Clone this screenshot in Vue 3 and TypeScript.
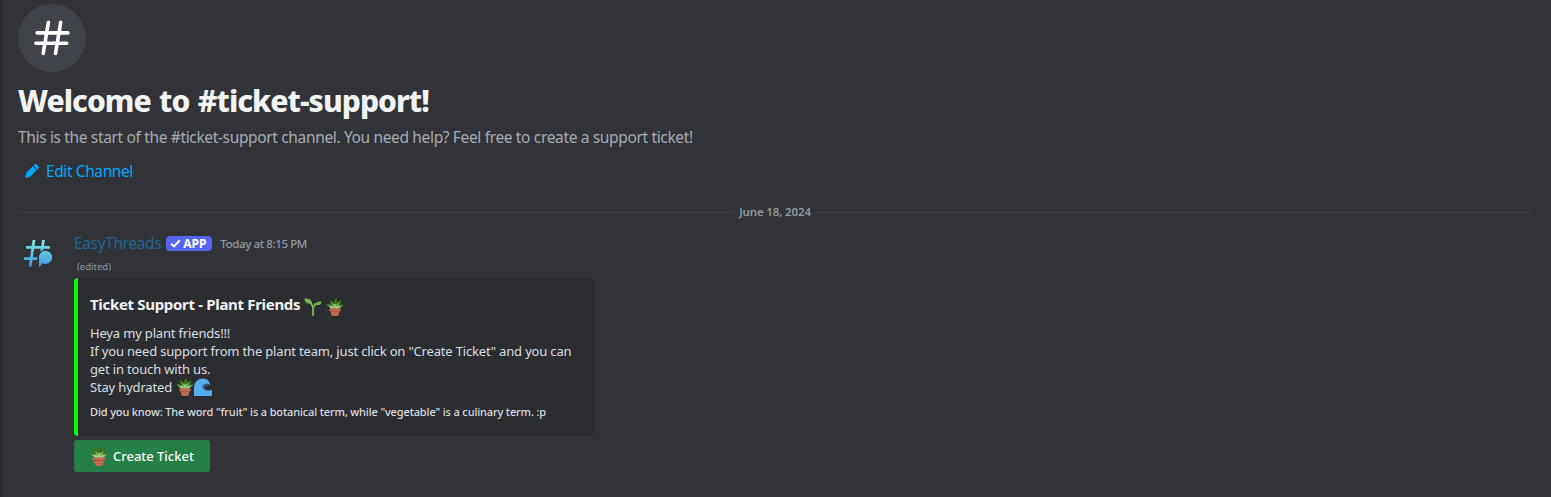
<script setup lang="ts">
interface Embed {
  title: string
  lines: string[]
  footer: string
}

const channel = 'ticket-support'
const embed: Embed = {
  title: 'Ticket Support - Plant Friends',
  lines: [
    'Heya my plant friends!!!',
    'If you need support from the plant team, just click on "Create Ticket" and you can',
    'get in touch with us.',
  ],
  footer: 'Did you know: The word "fruit" is a botanical term, while "vegetable" is a culinary term. :p',
}
</script>

<template>
  <svg class="defs" width="0" height="0" aria-hidden="true">
    <symbol id="plant" viewBox="0 0 18 18">
      <path d="M8.800 10C6.800 7.500 3.600 5.500 3.900 1.900 6 2.600 7 4 7.600 5.500 7.600 3 8.600 1 10.700 0 11.300 1.800 11.100 3.400 10.500 5 11.700 3.300 13.300 2.500 15.500 2.400 15 6.200 12.300 9.200 8.800 10Z" fill="#3e721d" />
      <path d="M8.500 10.400C5 10.400 2 9.300.6 6.200 3.200 5.600 6 6.700 8.500 10.400ZM9 10.400C11.300 6.800 14.300 5.900 17.500 6.700 15.900 9.600 12.500 10.700 9 10.400Z" fill="#4f8430" />
      <path d="M8.800 10.500C6.300 8.700 5.200 6.600 5.700 4.600 7.900 5.600 8.900 7.600 8.800 10.500ZM8.800 10.500C9 7.500 10.500 5.300 13 4.800 13 7.700 11.600 9.600 8.800 10.500Z" fill="#77b255" />
      <path d="M8.800 10.800C6.200 11 4 10.200 3 8.200 5.700 7.400 7.700 8.300 8.800 10.800ZM9 10.800C10.400 8.300 12.500 7.500 15 8.300 13.600 10.500 11.400 11.200 9 10.800ZM8.800 10.500C7.700 8.700 7.900 7 9.200 5.600 10.300 7.400 10.200 9 8.800 10.500Z" fill="#a6d388" />
      <path d="M3.700 11.300h10.600l-1.700 5.400c-.2.800-.7 1.300-1.500 1.300H6.900c-.8 0-1.300-.5-1.500-1.300Z" fill="#c1694f" />
      <rect x="3" y="10.400" width="12" height="2.300" rx=".8" fill="#c1694f" />
      <path d="M4.100 12.700h9.800l-.2.700H4.300Z" fill="#a0513a" />
    </symbol>
    <symbol id="hash" viewBox="0 0 36 36">
      <path d="M14.400 2.400 9.200 33.400M26.700 2.400 21.500 33.400M3.200 12.900H33.900M1.900 23.300H32.700" fill="none" stroke="currentColor" stroke-width="3.600" stroke-linecap="round" />
    </symbol>
  </svg>

  <main class="chat">
    <header class="welcome">
      <div class="channel-icon">
        <svg width="36" height="36"><use href="#hash" /></svg>
      </div>
      <h1><span>Welcome to #{{ channel }}!</span></h1>
      <p><span>This is the start of the #{{ channel }} channel. You need help? Feel free to create a support ticket!</span></p>
      <a class="edit">
        <svg width="14" height="14" viewBox="0 0 14 14">
          <path d="M9.300.800a1.800 1.800 0 0 1 2.600 0l1.300 1.300a1.800 1.800 0 0 1 0 2.600l-.8.800-3.900-3.900ZM7.900 2.200l3.900 3.900-6.100 6.100c-.2.200-.5.400-.8.500l-3.800 1.100a.75.75 0 0 1-.9-.9l1.100-3.800c.1-.3.300-.6.500-.8Z" fill="currentColor" />
        </svg>
        <span>Edit Channel</span>
      </a>
    </header>

    <div class="divider"><span>June 18, 2024</span></div>

    <article class="message">
      <svg class="avatar" width="30" height="30" viewBox="0 0 30 30">
        <defs>
          <linearGradient id="aqua" x1="0" y1="0" x2="0" y2="30" gradientUnits="userSpaceOnUse">
            <stop offset="0" stop-color="#7df0e6" />
            <stop offset="1" stop-color="#3d8fe0" />
          </linearGradient>
        </defs>
        <path d="M9.600 1h2.800l-.9 6h6.700l.9-6h2.800l-.9 6h6v2.700H3V7h5.700ZM8.300 9.700h2.800l-1.200 8.500h4.300v2.700H9.500l-1 6.500H5.700l1-6.500H1v-2.700h6.100Z" fill="url(#aqua)" />
        <path d="M17.700 9.500h2.900l-.2 1.300-3 1.700Z" fill="url(#aqua)" />
        <path d="M22.500 11.800a6.600 6.600 0 1 1 0 13.200c-1.100 0-2.100-.2-3-.7l-3.500 4V18.400a6.500 6.500 0 0 1 6.500-6.600Z" fill="url(#aqua)" />
      </svg>
      <div class="body">
        <div class="meta">
          <span class="author">EasyThreads</span>
          <span class="badge">
            <svg width="11" height="9" viewBox="0 0 11 9"><path d="M1.200 4.800 4 7.400 9.800 1.300" fill="none" stroke="#fff" stroke-width="2" /></svg>
            <span>APP</span>
          </span>
          <time>Today at 8:15 PM</time>
        </div>
        <div class="edited"><span>(edited)</span></div>

        <section class="embed">
          <h2>
            <span>{{ embed.title }}</span>
            <svg width="18" height="18" viewBox="0 0 18 18">
              <path d="M8.100 17.500V9.600C7.500 6.600 5.600 5.300 2.700 5 1.700 4.300 1 2.900.3.900 4.200-.1 7.300 1.300 8.200 5.200c.4.800.8 1.600 1.100 2.500.7-2 1.900-3 3.600-3.300 1.600-1.100 3.300-1.200 4.900-.5-.7 2.200-2.300 3.500-4.900 3.100-1.900.5-2.800 1.800-2.800 4v6.500c0 .6-2 .6-2 0Z" fill="#77b255" />
            </svg>
            <svg width="18" height="18"><use href="#plant" /></svg>
          </h2>
          <div class="description">
            <div v-for="(line, i) in embed.lines" :key="i"><span>{{ line }}</span></div>
            <div class="last">
              <span>Stay hydrated</span>
              <svg width="18" height="18"><use href="#plant" /></svg>
              <svg width="18" height="18" viewBox="0 0 18 18">
                <path d="M14.500 7.200C12.600 4.700 9.200 4.500 7.400 6.800 5.600 9.300 6.800 12.700 10 13.500c2.700.7 5.500.2 8-1.200v-.8c-2 .8-4.500.9-6 0-2.300-1.400-1.900-4.200 2.500-4.300Z" fill="#2a6797" />
                <path d="M0 17.500V10C0 4.300 3.700.4 8.800.4c4.300 0 7.400 2.800 7.400 7.200-1.500-2.100-4-2.800-6-1.600-2.300 1.500-2.300 4.600.2 5.900 2.300 1.200 5.300 1 7.600.2V16.500c0 .9-.6 1.500-1.500 1.500H.5Z" fill="#55acee" />
              </svg>
            </div>
          </div>
          <footer><span>{{ embed.footer }}</span></footer>
        </section>

        <button class="create" type="button">
          <svg width="20" height="20"><use href="#plant" /></svg>
          <span>Create Ticket</span>
        </button>
      </div>
    </article>
  </main>
</template>

<style>
body { background: #313338; }
</style>

<style scoped>
.defs { display: block; height: 0; }
.chat {
  box-sizing: border-box;
  width: 1551px;
  height: 497px;
  padding: 4px 19px 0 16px;
  border-left: 2px solid #2b2d31;
  background: #313338;
  color: #dbdee1;
  font-family: "Noto Sans", "Liberation Sans", sans-serif;
  overflow: hidden;
}
svg { display: block; flex: none; }
span, time { white-space: nowrap; }
h1, h2, p { margin: 0; }
.welcome { height: 208px; }
.channel-icon {
  display: flex;
  align-items: center;
  justify-content: center;
  width: 68px;
  height: 68px;
  border-radius: 50%;
  background: #41434a;
  color: #fff;
}
h1 {
  margin-top: 9px;
  font-size: 30px;
  font-weight: 800;
  line-height: 40px;
  color: #f2f3f5;
  letter-spacing: -1px;
  word-spacing: 1.500px;
}
h1 span { letter-spacing: -0.95px; }
.welcome p {
  margin-top: 6px;
  font-size: 15.5px;
  line-height: 20px;
  color: #a8acb3;
  letter-spacing: -0.35px;
}
.edit {
  display: flex;
  align-items: center;
  gap: 7px;
  height: 20px;
  margin-top: 14px;
  padding-left: 7px;
  font-size: 15.5px;
  color: #00a8fc;
  letter-spacing: -0.4px;
}
.divider {
  display: flex;
  align-items: center;
  gap: 4px;
  height: 1px;
  font-size: 11.5px;
  font-weight: 600;
  color: #949ba4;
  letter-spacing: -0.15px;
}
.divider span { margin-top: -2px; }
.divider::before, .divider::after {
  content: "";
  flex: 1;
  height: 1px;
  background: #3f4147;
}
.message { display: flex; gap: 21px; margin-top: 20px; }
.avatar { margin: 6px 0 0 5px; }
.body { flex: 1; }
.meta { display: flex; align-items: center; height: 21px; }
.author { margin-bottom: 2px; font-size: 15.5px; color: #206694; letter-spacing: -0.37px; }
.badge {
  display: flex;
  align-items: center;
  gap: 2px;
  box-sizing: border-box;
  width: 46px;
  height: 15px;
  margin-left: 5px;
  padding-left: 4px;
  border-radius: 4px;
  background: #5865f2;
  color: #fff;
  font-size: 12px;
  font-weight: 700;
}
time { margin-left: 8px; font-size: 11.5px; font-weight: 500; color: #949ba4; letter-spacing: -0.38px; }
.edited { height: 24px; padding-left: 3px; font-size: 9.5px; line-height: 26px; color: #949ba4; }
.embed {
  box-sizing: border-box;
  width: 520px;
  height: 158px;
  padding: 15px 12px 0;
  border-left: 4px solid #0f0;
  border-radius: 4px;
  background: #2b2d31;
}
h2 {
  display: flex;
  align-items: center;
  gap: 4px;
  height: 23px;
  font-size: 15px;
  font-weight: 700;
  color: #f2f3f5;
  letter-spacing: -0.32px;
}
h2 span { margin-bottom: 2px; }
h2 svg { margin-top: 4px; }
.description { margin-top: 8px; font-size: 13px; line-height: 18px; letter-spacing: -0.17px; }
.last { display: flex; height: 18px; }
.last svg:first-of-type { margin-left: 4px; }
footer { margin-top: 8px; font-size: 11px; font-weight: 500; line-height: 16px; letter-spacing: -0.14px; }
.create {
  display: flex;
  align-items: center;
  gap: 4px;
  width: 136px;
  height: 32px;
  margin-top: 4px;
  padding: 0 0 0 15px;
  border: 0;
  border-radius: 3px;
  background: #248046;
  color: #fff;
  font: 500 13px "Noto Sans", "Liberation Sans", sans-serif;
  letter-spacing: -0.02px;
}
</style>
